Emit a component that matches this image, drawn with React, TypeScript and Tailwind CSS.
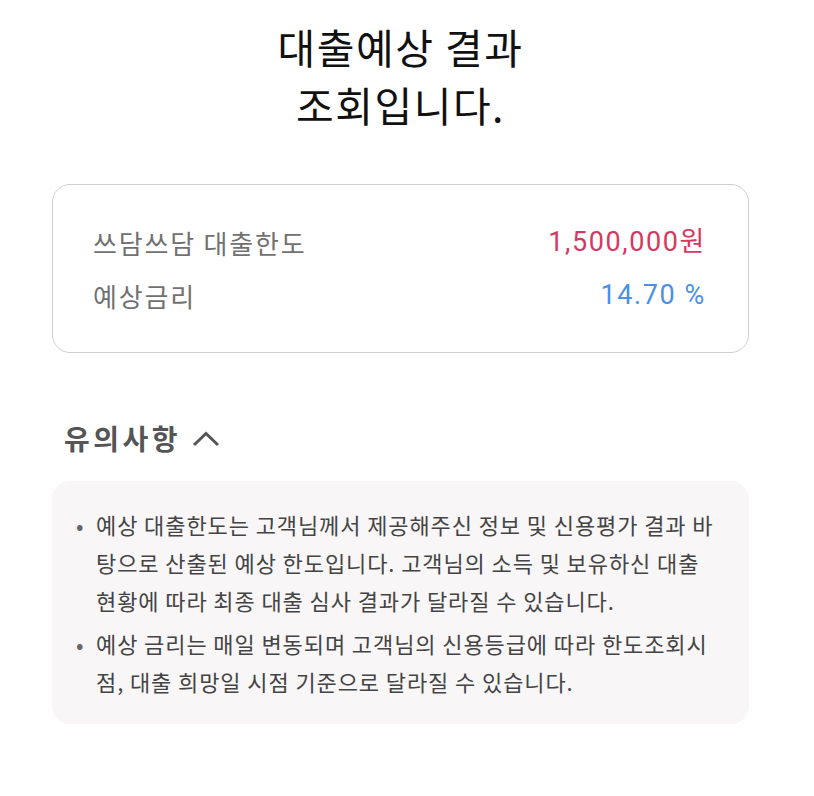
import React from 'react';

const notices = [
  '예상 대출한도는 고객님께서 제공해주신 정보 및 신용평가 결과 바탕으로 산출된 예상 한도입니다. 고객님의 소득 및 보유하신 대출 현황에 따라 최종 대출 심사 결과가 달라질 수 있습니다.',
  '예상 금리는 매일 변동되며 고객님의 신용등급에 따라 한도조회시 점, 대출 희망일 시점 기준으로 달라질 수 있습니다.',
];

const font = { fontFamily: '"Noto Sans CJK KR", "Noto Sans", sans-serif' };
const numFont = { fontFamily: 'Roboto, "Noto Sans CJK KR", sans-serif' };

export default function App() {
  return (
    <div className="w-[814px] h-[796px] bg-white" style={font}>
      <h1 className="pt-[17px] pr-[13px] text-center text-[41px] leading-[58px] font-normal text-[#111] tracking-[1.5px]">
        대출예상 결과
        <br />
        조회입니다.
      </h1>

      <div className="ml-[52px] mt-[51px] w-[697px] h-[169px] rounded-[18px] border-[1.5px] border-[#cfcfcf] pl-[40px] pr-[42px] pt-[31px]">
        <div className="flex items-center justify-between text-[26px] leading-[53px]">
          <span className="text-[#717171] tracking-[1.8px]">쓰담쓰담 대출한도</span>
          <span className="text-[27px] text-[#d23a5f] tracking-[1.6px]" style={numFont}>1,500,000원</span>
        </div>
        <div className="flex items-center justify-between text-[26px] leading-[53px]">
          <span className="text-[#717171] tracking-[1.8px]">예상금리</span>
          <span className="text-[27px] text-[#4a8fe8] tracking-[1.6px]" style={numFont}>14.70 %</span>
        </div>
      </div>

      <div className="ml-[64px] mt-[65px] flex items-center gap-[11px]">
        <span className="text-[28px] leading-[40px] font-bold text-[#555] tracking-[3.5px]">유의사항</span>
        <svg width="28" height="18" viewBox="0 0 28 18" className="mt-[2px]">
          <path d="M2 15 L14 3.5 L26 15" fill="none" stroke="#555" strokeWidth="3" />
        </svg>
      </div>

      <div className="ml-[52px] mt-[23px] w-[697px] rounded-[18px] bg-[#f8f6f7] pl-[24px] pr-[25px] pt-[24px] pb-[24px]">
        <ul className="flex flex-col gap-[5px]">
          {notices.map((text, i) => (
            <li key={i} className="flex text-[22px] leading-[38px] text-[#444] tracking-[0.9px]">
              <span className="w-[20px] shrink-0 text-[#666]">•</span>
              <span>{text}</span>
            </li>
          ))}
        </ul>
      </div>
    </div>
  );
}
